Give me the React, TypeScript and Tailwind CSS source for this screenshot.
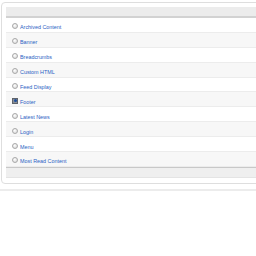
import React from 'react';

const ITEMS = [
  'Archived Content',
  'Banner',
  'Breadcrumbs',
  'Custom HTML',
  'Feed Display',
  'Footer',
  'Latest News',
  'Login',
  'Menu',
  'Most Read Content',
];

const SELECTED = 'Footer';

function Radio({ checked }: { checked: boolean }) {
  if (checked) {
    return (
      <span className="w-[6px] h-[6px] shrink-0 bg-[#8a8f96] border border-[#5f646b] flex items-center justify-center">
        <span className="w-[3px] h-[3px] rounded-full bg-[#1e4f9c]" />
      </span>
    );
  }
  return (
    <span className="w-[6px] h-[6px] shrink-0 rounded-full border border-[#a9a9a9] bg-[radial-gradient(circle_at_40%_35%,#ffffff,#d4d4d4)]" />
  );
}

export default function App() {
  return (
    <div
      className="w-[256px] h-[256px] overflow-hidden bg-white"
      style={{ fontFamily: '"Liberation Sans", Arial, sans-serif' }}
    >
      <div className="ml-[1px] mt-[2px] w-[280px] border border-[#dedede] rounded-[4px] pt-[4px] pl-[4px] pb-[5px]">
        <div className="border-r border-[#e2e2e2]">
          <div className="h-[11px] bg-[#ececec] border-b-2 border-[#d2d2d2]" />
          {ITEMS.map((name, i) => (
            <div
              key={name}
              className={`h-[14.9px] flex items-end gap-[2px] pl-[6px] pb-[1.5px] border-b border-[#ececec] ${
                i % 2 === 1 ? 'bg-[#f7f7f7]' : 'bg-white'
              }`}
            >
              <span className="h-[7px] flex items-start">
                <Radio checked={name === SELECTED} />
              </span>
              <span className="text-[5.4px] leading-[6px] text-[#2a62c4]">{name}</span>
            </div>
          ))}
          <div className="h-[11px] bg-[#efefef] border-t border-[#c8c8c8] border-b border-b-[#e4e4e4]" />
        </div>
      </div>
      <div className="mt-[5px] border-t-2 border-[#ececec]" />
    </div>
  );
}
